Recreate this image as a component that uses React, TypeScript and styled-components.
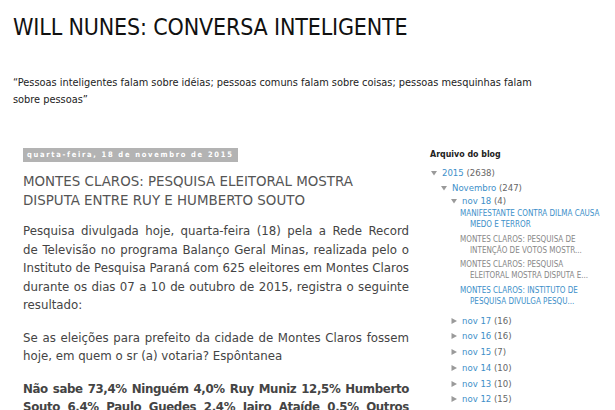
import React from 'react';
import styled, { createGlobalStyle } from 'styled-components';

const GlobalStyle = createGlobalStyle`
  body {
    margin: 0;
    background: #fff;
    font-family: "DejaVu Sans Condensed", "DejaVu Sans", sans-serif;
    overflow: hidden;
  }
`;

const Page = styled.div`
  width: 615px;
  height: 410px;
  overflow: hidden;
`;

const Header = styled.header`
  padding: 9px 0 0 13px;
`;

const BlogTitle = styled.h1`
  margin: 0;
  font-size: 23px;
  font-weight: 400;
  letter-spacing: -0.15px;
  line-height: 36px;
  color: #111;
`;

const Tagline = styled.p`
  margin: 29px 0 0;
  width: 520px;
  font-size: 10.9px;
  line-height: 17px;
  color: #222;
`;

const Columns = styled.div`
  display: flex;
  gap: 21px;
  padding: 34px 0 0 23px;
`;

const Main = styled.main`
  width: 386px;
  flex-shrink: 0;
`;

const DateHeader = styled.h2`
  display: inline-block;
  margin: 0;
  padding: 0 4px;
  background: #b3b3b3;
  color: #fff;
  font-size: 7.5px;
  font-weight: 700;
  line-height: 14px;
  letter-spacing: 1.7px;
`;

const PostTitle = styled.h3`
  margin: 10px 0 0;
  font-size: 14.9px;
  font-weight: 400;
  line-height: 19px;
  color: #555;
`;

const Paragraph = styled.p<{ $bold?: boolean }>`
  margin: 0 0 14px;
  font-size: 13.1px;
  line-height: 18.5px;
  text-align: justify;
  color: #444;
  font-weight: ${({ $bold }) => ($bold ? 700 : 400)};
  letter-spacing: ${({ $bold }) => ($bold ? '-0.35px' : '0')};
  &:first-of-type {
    margin-top: 12px;
  }
`;

const Sidebar = styled.aside`
  width: 173px;
  flex-shrink: 0;
  padding-top: 7px;
  font-size: 9.5px;
`;

const WidgetTitle = styled.h4`
  margin: 0 0 7px;
  font-size: 8.8px;
  font-weight: 700;
  color: #222;
`;

const Tree = styled.ul<{ $indent: number }>`
  list-style: none;
  margin: 0;
  padding: 0 0 0 ${({ $indent }) => $indent}px;
`;

const Node = styled.li<{ $height: number }>`
  line-height: ${({ $height }) => $height}px;
`;

const Toggle = styled.svg`
  display: inline-block;
  width: 6px;
  height: 6px;
  margin-right: 5px;
  vertical-align: 0;
  fill: #9a9a9a;
`;

const Link = styled.a`
  color: #3d8fc9;
  text-decoration: none;
`;

const Count = styled.span`
  color: #666;
`;

const Posts = styled.ul`
  list-style: none;
  margin: 1px 0 6px;
  padding: 0 0 0 9px;
`;

const PostItem = styled.li<{ $gray?: boolean }>`
  margin-bottom: 3.5px;
  padding-left: 10px;
  text-indent: -10px;
  line-height: 11px;
  font-size: 8px;
  a {
    color: ${({ $gray }) => ($gray ? '#888' : '#3d8fc9')};
  }
`;

const Open = () => (
  <Toggle viewBox="0 0 6 6">
    <path d="M0 1h6L3 5.5z" />
  </Toggle>
);

const Closed = () => (
  <Toggle viewBox="0 0 6 6">
    <path d="M0.5 0v6L6 3z" />
  </Toggle>
);

const posts = [
  { title: 'MANIFESTANTE CONTRA DILMA CAUSA MEDO E TERROR', gray: false },
  { title: 'MONTES CLAROS: PESQUISA DE INTENÇÃO DE VOTOS MOSTR...', gray: true },
  { title: 'MONTES CLAROS: PESQUISA ELEITORAL MOSTRA DISPUTA E...', gray: true },
  { title: 'MONTES CLAROS: INSTITUTO DE PESQUISA DIVULGA PESQU...', gray: false },
];

const days = [
  ['nov 17', 16],
  ['nov 16', 16],
  ['nov 15', 7],
  ['nov 14', 10],
  ['nov 13', 10],
  ['nov 12', 15],
];

export default function App() {
  return (
    <Page>
      <GlobalStyle />
      <Header>
        <BlogTitle>WILL NUNES: CONVERSA INTELIGENTE</BlogTitle>
        <Tagline>
          “Pessoas inteligentes falam sobre idéias; pessoas comuns falam sobre coisas; pessoas
          mesquinhas falam sobre pessoas”
        </Tagline>
      </Header>
      <Columns>
        <Main>
          <DateHeader>quarta-feira, 18 de novembro de 2015</DateHeader>
          <PostTitle>MONTES CLAROS: PESQUISA ELEITORAL MOSTRA DISPUTA ENTRE RUY E HUMBERTO SOUTO</PostTitle>
          <Paragraph>
            Pesquisa divulgada hoje, quarta-feira (18) pela a Rede Record de{'\u00a0'}Televisão no
            programa Balanço Geral Minas, realizada pelo o Instituto de Pesquisa Paraná com 625
            eleitores em Montes Claros durante os dias 07 a 10 de outubro de 2015, registra o
            seguinte resultado:
          </Paragraph>
          <Paragraph>
            Se as eleições para prefeito da cidade de Montes Claros fossem hoje, em quem o sr (a)
            votaria? Espôntanea
          </Paragraph>
          <Paragraph $bold>
            Não sabe 73,4% Ninguém 4,0% Ruy Muniz 12,5% Humberto Souto 6,4% Paulo Guedes 2,4% Jairo
            Ataíde 0,5% Outros 0,8%
          </Paragraph>
        </Main>
        <Sidebar>
          <WidgetTitle>Arquivo do blog</WidgetTitle>
          <Tree $indent={1}>
            <Node $height={14.5}>
              <Open />
              <Link href="#">2015</Link> <Count>(2638)</Count>
              <Tree $indent={10}>
                <Node $height={14}>
                  <Open />
                  <Link href="#">Novembro</Link> <Count>(247)</Count>
                  <Tree $indent={10}>
                    <Node $height={12.5}>
                      <Open />
                      <Link href="#">nov 18</Link> <Count>(4)</Count>
                      <Posts>
                        {posts.map((p) => (
                          <PostItem key={p.title} $gray={p.gray}>
                            <Link href="#">{p.title}</Link>
                          </PostItem>
                        ))}
                      </Posts>
                    </Node>
                    {days.map(([d, n]) => (
                      <Node key={d} $height={15.8}>
                        <Closed />
                        <Link href="#">{d}</Link> <Count>({n})</Count>
                      </Node>
                    ))}
                  </Tree>
                </Node>
              </Tree>
            </Node>
          </Tree>
        </Sidebar>
      </Columns>
    </Page>
  );
}
